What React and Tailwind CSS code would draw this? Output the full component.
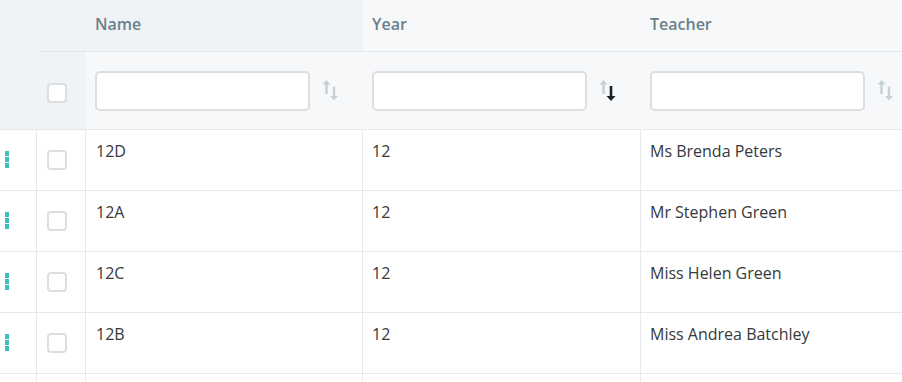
const rows = [
  { name: "12D", year: "12", teacher: "Ms Brenda Peters" },
  { name: "12A", year: "12", teacher: "Mr Stephen Green" },
  { name: "12C", year: "12", teacher: "Miss Helen Green" },
  { name: "12B", year: "12", teacher: "Miss Andrea Batchley" },
];

function SortIcon({ active }) {
  return (
    <svg width="18" height="23" viewBox="0 0 18 23" className="shrink-0">
      <path d="M4.5 1 L0.5 5.5 H3.3 V15 H5.7 V5.5 H8.5 Z" fill="#c6d1d7" />
      {active ? (
        <path d="M12 22 L7.5 17 H10.7 V7 H13.3 V17 H16.5 Z" fill="#1c2024" />
      ) : (
        <path d="M12 21.5 L8 17 H10.8 V7.5 H13.2 V17 H16 Z" fill="#c6d1d7" />
      )}
    </svg>
  );
}

function Checkbox() {
  return (
    <div className="w-5 h-5 rounded-[4px] border-2 border-[#dcdfe2] bg-white" />
  );
}

function DragHandle() {
  return (
    <div className="flex flex-col gap-[1.5px]">
      <div className="w-[3.5px] h-[4.5px] bg-[#3dbfbd]" />
      <div className="w-[3.5px] h-[4.5px] bg-[#3dbfbd]" />
      <div className="w-[3.5px] h-[4.5px] bg-[#3dbfbd]" />
    </div>
  );
}

function FilterCell({ width, active }) {
  return (
    <div className={`flex items-center h-full pl-[9px] gap-[12px] ${width}`}>
      <div className="w-[215px] h-[40px] rounded-[5px] border-2 border-[#dcdfe2] bg-white" />
      <SortIcon active={active} />
    </div>
  );
}

export default function App() {
  return (
    <div
      className="w-[902px] h-[382px] overflow-hidden bg-white text-[#35393c]"
      style={{ fontFamily: '"Open Sans", "Noto Sans", sans-serif' }}
    >
      <div className="flex h-[130px] border-b border-[#e6eaec]">
        <div className="w-[37px] bg-[#eff3f5]" />
        <div className="flex-1 flex flex-col">
          <div className="flex h-[52px] border-b border-[#e3e8eb] text-[16px] font-semibold text-[#6b808d]">
            <div className="w-[326px] bg-[#eff3f5] flex items-center pl-[58px] pb-[4px]">
              Name
            </div>
            <div className="w-[278px] bg-[#f6f8f9] flex items-center pl-[9px] pb-[4px]">
              Year
            </div>
            <div className="flex-1 bg-[#f6f8f9] flex items-center pl-[9px] pb-[4px]">
              Teacher
            </div>
          </div>
          <div className="flex flex-1">
            <div className="w-[49px] bg-[#eff3f5] flex items-center pl-[10px] pt-[5px]">
              <Checkbox />
            </div>
            <div className="flex flex-1 bg-[#f6f8f9]">
              <FilterCell width="w-[277px]" />
              <FilterCell width="w-[278px]" active />
              <FilterCell width="flex-1" />
            </div>
          </div>
        </div>
      </div>
      {rows.concat([{ name: "", year: "", teacher: "", empty: true }]).map(
        (r, i) => (
          <div
            key={i}
            className="flex h-[61px] border-b border-[#e6eaec] text-[16px]"
          >
            <div className="w-[37px] border-r border-[#e6eaec] flex items-center pl-[5px] pb-[1px]">
              {!r.empty && <DragHandle />}
            </div>
            <div className="w-[49px] border-r border-[#e6eaec] flex items-center pl-[10px] pb-[1px]">
              {!r.empty && <Checkbox />}
            </div>
            <div className="w-[277px] border-r border-[#e6eaec] pl-[10px] pt-[10px] leading-[22px]">
              {r.name}
            </div>
            <div className="w-[278px] border-r border-[#e6eaec] pl-[9px] pt-[10px] leading-[22px]">
              {r.year}
            </div>
            <div className="flex-1 pl-[9px] pt-[10px] leading-[22px]">
              {r.teacher}
            </div>
          </div>
        )
      )}
    </div>
  );
}
